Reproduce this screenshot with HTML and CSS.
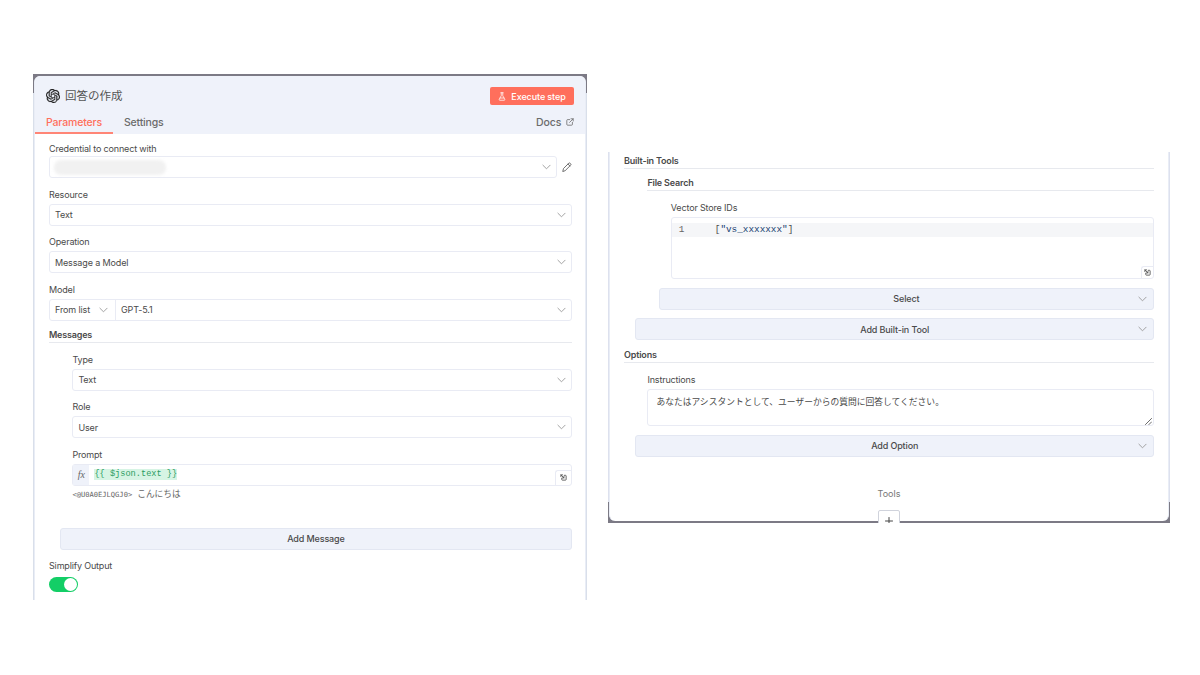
FILE: index.html
```html
<!DOCTYPE html>
<html lang="ja">
<head>
    <meta charset="UTF-8">
    <meta name="viewport" content="width=device-width, initial-scale=1.0">
    <title>回答の作成</title>
    <link rel="stylesheet" href="styles.css">
</head>
<body>
    <!-- Shared icons -->
    <svg width="0" height="0" class="defs">
        <symbol id="chevron" viewBox="0 0 10 6"><path d="M1 1l4 4 4-4"/></symbol>
        <symbol id="expand" viewBox="0 0 8 8"><path d="M1 3V1h2M1 1l3.500 3.500M4.500 2.500v2h-2M5 1.500h1.300q.7 0 .7.7v4.100q0 .7-.7.7H2.700q-.7 0-.7-.7V5"/></symbol>
    </svg>

    <!-- Left panel -->
    <section class="frame frame-left">
        <div class="panel panel-left">
            <header class="head">
                <div class="title-row">
                    <svg class="logo" viewBox="0 0 24 24"><path d="M22.282 9.821a5.985 5.985 0 0 0-.516-4.910 6.046 6.046 0 0 0-6.510-2.900A6.065 6.065 0 0 0 4.981 4.182a5.985 5.985 0 0 0-3.998 2.900 6.046 6.046 0 0 0 .743 7.097 5.980 5.980 0 0 0 .511 4.911 6.051 6.051 0 0 0 6.515 2.900A5.985 5.985 0 0 0 13.260 24a6.056 6.056 0 0 0 5.772-4.206 5.990 5.990 0 0 0 3.998-2.900 6.056 6.056 0 0 0-.748-7.073zm-9.022 12.608a4.476 4.476 0 0 1-2.876-1.041l.142-.080 4.778-2.758a.795.795 0 0 0 .393-.681v-6.737l2.020 1.169a.071.071 0 0 1 .038.052v5.583a4.504 4.504 0 0 1-4.495 4.493zm-9.660-4.125a4.471 4.471 0 0 1-.535-3.014l.142.085 4.783 2.759a.771.771 0 0 0 .781 0l5.843-3.369v2.332a.080.080 0 0 1-.033.062L9.740 19.950a4.499 4.499 0 0 1-6.140-1.646zM2.341 7.896a4.485 4.485 0 0 1 2.365-1.973V11.600a.766.766 0 0 0 .388.677l5.814 3.354-2.020 1.169a.076.076 0 0 1-.071 0l-4.830-2.787A4.504 4.504 0 0 1 2.341 7.896zm16.597 3.856l-5.833-3.388 2.015-1.164a.076.076 0 0 1 .071 0l4.830 2.792a4.494 4.494 0 0 1-.676 8.104v-5.677a.790.790 0 0 0-.407-.667zm2.010-3.024l-.142-.085-4.774-2.782a.776.776 0 0 0-.785 0L9.409 9.230V6.897a.066.066 0 0 1 .028-.062l4.830-2.786a4.499 4.499 0 0 1 6.680 4.659zM8.307 12.863l-2.020-1.164a.080.080 0 0 1-.038-.057V6.075a4.499 4.499 0 0 1 7.375-3.454l-.142.080-4.778 2.758a.795.795 0 0 0-.393.682zm1.097-2.366l2.602-1.500 2.607 1.500v2.999l-2.597 1.500-2.607-1.500z"/></svg>
                    <h1>回答の作成</h1>
                    <button class="execute">
                        <svg viewBox="0 0 10 12"><path d="M3.500 1h3M4 1v4L1.300 9.700Q.8 11 2 11h6q1.200 0 .7-1.300L6 5V1M2.500 8h5"/></svg>
                        Execute step
                    </button>
                </div>
                <nav class="tabs">
                    <a class="tab active">Parameters</a>
                    <a class="tab">Settings</a>
                    <a class="docs">Docs
                        <svg viewBox="0 0 10 10"><path d="M4.500 2H2q-1 0-1 1v5q0 1 1 1h5q1 0 1-1V5.500M6.200 1H9v2.800M9 1L4.500 5.500"/></svg>
                    </a>
                </nav>
            </header>

            <div class="form">
                <label>Credential to connect with</label>
                <div class="credential">
                    <div class="input"><span class="redacted"></span><svg class="chev"><use href="#chevron"/></svg></div>
                    <svg class="pencil" viewBox="0 0 12 12"><path d="M1 11l.8-3.200 6.400-6.400q.7-.7 1.600.1l.6.6q.8.900.1 1.600L4.100 10.100zM7.200 2.500l2.300 2.300"/></svg>
                </div>
                <label>Resource</label>
                <div class="input">Text<svg class="chev"><use href="#chevron"/></svg></div>
                <label>Operation</label>
                <div class="input">Message a Model<svg class="chev"><use href="#chevron"/></svg></div>
                <label>Model</label>
                <div class="input model">
                    <div class="mode">From list<svg class="chev"><use href="#chevron"/></svg></div>
                    GPT-5.1<svg class="chev"><use href="#chevron"/></svg>
                </div>

                <h2 class="messages-title">Messages</h2>
                <div class="group">
                    <label>Type</label>
                    <div class="input">Text<svg class="chev"><use href="#chevron"/></svg></div>
                    <label>Role</label>
                    <div class="input">User<svg class="chev"><use href="#chevron"/></svg></div>
                    <label>Prompt</label>
                    <div class="input prompt">
                        <span class="fx">fx</span>
                        <code>{{ $json.text }}</code>
                        <span class="expand"><svg><use href="#expand"/></svg></span>
                    </div>
                    <p class="hint"><span>&lt;@U0A0EJLQGJ0&gt;</span>こんにちは</p>
                </div>
                <button class="add add-message">Add Message</button>
                <label>Simplify Output</label>
                <div class="toggle"></div>
            </div>
        </div>
    </section>

    <!-- Right panel -->
    <section class="frame frame-right">
        <div class="panel panel-right">
            <h2>Built-in Tools</h2>
            <div class="group">
                <h2 class="search-title">File Search</h2>
                <div class="group">
                    <label>Vector Store IDs</label>
                    <div class="editor">
                        <div class="line"><span class="num">1</span><code>[<b>"vs_xxxxxxx"</b>]</code></div>
                        <span class="expand"><svg><use href="#expand"/></svg></span>
                    </div>
                </div>
                <button class="add select">Select<svg class="chev"><use href="#chevron"/></svg></button>
            </div>
            <button class="add add-tool">Add Built-in Tool<svg class="chev"><use href="#chevron"/></svg></button>

            <h2 class="options-title">Options</h2>
            <div class="group">
                <label>Instructions</label>
                <div class="textarea">あなたはアシスタントとして、ユーザーからの質問に回答してください。
                    <svg class="grip" viewBox="0 0 8 8"><path d="M.5 7.500l7-7M4.500 7.500l3-3"/></svg>
                </div>
            </div>
            <button class="add add-option">Add Option<svg class="chev"><use href="#chevron"/></svg></button>

            <div class="tools">
                <span>Tools</span>
                <div class="plus"><svg viewBox="0 0 8 8"><path d="M4 .5v7M.5 4h7"/></svg></div>
            </div>
        </div>
    </section>
</body>
</html>
```
FILE: styles.css
```css
* {
    box-sizing: border-box;
}
body {
    margin: 0;
    width: 1200px;
    height: 675px;
    overflow: hidden;
    background: #fff;
    display: flex;
    align-items: flex-start;
    font-family: Inter, "Noto Sans CJK JP", sans-serif;
    font-size: 9px;
    color: #4a4a4a;
}
svg {
    fill: none;
    stroke: currentColor;
    stroke-linecap: round;
    stroke-linejoin: round;
    flex: none;
}
.defs {
    position: absolute;
}
h1, h2, p {
    margin: 0;
}
button {
    font: inherit;
    color: inherit;
}

/* Frames: dark backdrop peeks out around the rounded corners */
.frame {
    overflow: hidden;
}
.frame-left {
    margin: 74px 0 0 33px;
    width: 554px;
    height: 526px;
    padding: 2px 1px 0 1px;
    background: linear-gradient(#7c7a85 19px, #d9dfea 19px);
}
.frame-right {
    margin: 152px 0 0 21px;
    width: 562px;
    height: 371px;
    padding: 0 1px 2px 1px;
    background: linear-gradient(#dde1ee 350px, #7c7a85 350px);
}
.panel {
    height: 100%;
    background: #fff;
    border: 0 solid #e9edf6;
    border-width: 0 1px;
}
.panel-left {
    border-radius: 6px 6px 0 0;
    overflow: hidden;
}
.panel-right {
    border-radius: 0 0 6px 6px;
    padding: 0 14px;
}

/* Header */
.head {
    height: 58px;
    background: #eff2fa;
}
.title-row {
    display: flex;
    align-items: center;
    height: 35px;
    padding: 4px 11px 0 10.500px;
}
.logo {
    width: 14px;
    height: 14px;
    fill: #222;
    stroke: #222;
    stroke-width: 0.4;
}
h1 {
    margin: -2px 0 0 5.500px;
    font-size: 11.5px;
    font-weight: 400;
    color: #555;
}
.execute {
    display: flex;
    align-items: center;
    justify-content: center;
    gap: 5px;
    width: 84px;
    height: 18px;
    margin: 1px 0 0 auto;
    padding: 0;
    border: 0;
    border-radius: 2px;
    background: #ff6f5c;
    color: #fff;
    font-weight: 500;
    letter-spacing: -0.1px;
}
.execute svg {
    width: 8px;
    height: 9px;
}
.tabs {
    display: flex;
    height: 23px;
    font-size: 10.5px;
    font-weight: 500;
    line-height: 23px;
    letter-spacing: -0.16px;
    color: #6b6b6b;
}
.tab {
    padding: 0 11px;
}
.tab.active {
    color: #ff6f5c;
    border-bottom: 2px solid #ff8576;
}
.docs {
    margin: 0 11px 0 auto;
    letter-spacing: -0.1px;
}
.docs svg {
    width: 8px;
    height: 8px;
    margin-left: 2px;
}

/* Form */
.form {
    padding: 4.500px 13.200px 0 14px;
}
label {
    display: block;
    height: 19px;
    line-height: 19px;
    font-weight: 400;
    letter-spacing: -0.16px;
}
.input {
    display: flex;
    align-items: center;
    height: 22px;
    margin-bottom: 6.500px;
    padding: 0 5px;
    border: 1px solid #e9ebf4;
    border-radius: 3px;
    font-weight: 400;
    letter-spacing: -0.13px;
}
.credential {
    display: flex;
    align-items: center;
    height: 22px;
    margin: -1.500px 0 6.700px;
}
.credential .input {
    flex: 1;
    margin: 0;
}
.redacted {
    width: 112px;
    height: 15px;
    margin-left: -1px;
    border-radius: 7px;
    background: #f1f1f1;
    filter: blur(1.500px);
}
.pencil {
    width: 10px;
    height: 10px;
    margin-left: 5px;
    color: #555;
}
.chev {
    width: 9px;
    height: 6px;
    margin-left: auto;
    color: #999;
}
.input.model {
    margin-bottom: 0;
}
.mode {
    display: flex;
    align-items: center;
    width: 61px;
    height: 100%;
    margin-right: 5px;
    padding-right: 7px;
    border-right: 1px solid #e9ebf4;
}
h2 {
    height: 17px;
    line-height: 17px;
    font-size: 9px;
    font-weight: 600;
    letter-spacing: -0.18px;
    border-bottom: 1px solid #e7e9ee;
}
.messages-title {
    margin: 4.700px 0 6.700px;
    height: 17.500px;
    line-height: 19px;
}
.group {
    margin-left: 23.400px;
}
.input.prompt {
    position: relative;
    padding: 0;
    margin-bottom: 0;
    letter-spacing: 0;
}
.fx {
    width: 16px;
    height: 100%;
    text-align: center;
    background: #eff2fa;
    font: italic 10px/19px "Liberation Serif", serif;
    color: #666;
}
code {
    font-family: "Liberation Mono", monospace;
}
.prompt code {
    margin-left: 5px;
    line-height: 11px;
    font-size: 8.650px;
    color: #2b9c62;
    background: #d6f4e4;
}
.expand {
    position: absolute;
    right: 0;
    bottom: 0;
    width: 16px;
    height: 15px;
    display: flex;
    align-items: center;
    justify-content: center;
    border: 1px solid #e9ebf4;
    border-width: 1px 0 0 1px;
    border-radius: 3px 0 0 0;
    color: #555;
}
.expand svg {
    width: 7px;
    height: 7px;
}
.hint {
    display: flex;
    gap: 5px;
    height: 16px;
    line-height: 17px;
    font-size: 8.700px;
    color: #666;
}
.hint span {
    font-family: "DejaVu Sans Mono", monospace;
    font-size: 7.100px;
}
.add {
    display: flex;
    align-items: center;
    justify-content: center;
    position: relative;
    height: 22px;
    padding: 0;
    border: 1px solid #e3e7f2;
    border-radius: 3px;
    background: #eff2fa;
    font-weight: 500;
    letter-spacing: -0.14px;
}
.add .chev {
    position: absolute;
    right: 5.500px;
}
.add-message {
    width: calc(100% - 11px);
    margin: 26px 0 6.500px 11px;
}
.toggle {
    width: 29px;
    height: 15px;
    margin-top: 1.500px;
    padding: 1px;
    border-radius: 8px;
    background: #13ce66;
}
.toggle::after {
    content: "";
    display: block;
    width: 13px;
    height: 13px;
    margin-left: auto;
    border-radius: 50%;
    background: #fff;
}

/* Right panel */
.search-title {
    margin: 5px 0 7.300px;
    line-height: 18px;
}
.editor {
    position: relative;
    height: 62px;
    padding-top: 5px;
    border: 1px solid #e9ebf4;
    border-radius: 3px;
}
.line {
    display: flex;
    height: 14px;
    line-height: 14px;
    background: #f5f6f8;
    font-size: 9.350px;
}
.num {
    width: 43px;
    padding-left: 7px;
    font-family: "Liberation Mono", monospace;
    color: #666;
}
.line b {
    color: #183e70;
    font-weight: 400;
}
.editor .expand {
    width: 12px;
    height: 12px;
}
.select, .add-tool, .add-option {
    width: calc(100% - 11.400px);
    margin: 8.600px 0 0 11.400px;
}
.options-title {
    margin: 5.500px 0 7px;
    line-height: 18px;
}
.textarea {
    position: relative;
    height: 37px;
    padding: 5.500px 8px;
    border: 1px solid #e9ebf4;
    border-radius: 3px;
    font-size: 8.780px;
    line-height: 14px;
}
.grip {
    position: absolute;
    right: 1px;
    bottom: 0;
    width: 7px;
    height: 7px;
    color: #555;
}
.add-option {
    margin-top: 9px;
}
.tools {
    display: flex;
    flex-direction: column;
    align-items: center;
    margin-top: 31.500px;
    color: #777;
}
.plus {
    width: 22px;
    height: 20px;
    margin-top: 11px;
    padding-top: 5.500px;
    border: 1px solid #d0d3dc;
    border-radius: 2px;
    text-align: center;
    line-height: 0;
    color: #444;
    background: #fff;
}
.plus svg {
    width: 8px;
    height: 8px;
}
```
